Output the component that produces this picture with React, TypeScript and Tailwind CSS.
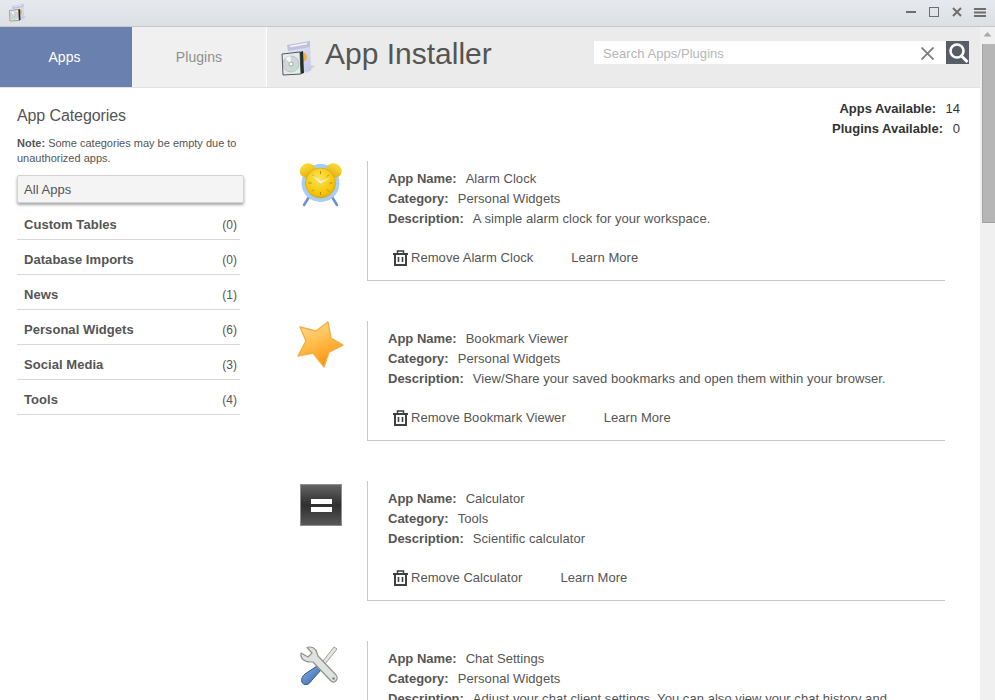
import { useId } from "react"

const categories = [
  { name: "Custom Tables", count: 0 },
  { name: "Database Imports", count: 0 },
  { name: "News", count: 1 },
  { name: "Personal Widgets", count: 6 },
  { name: "Social Media", count: 3 },
  { name: "Tools", count: 4 },
]

function InstallerIcon({ className }: { className?: string }) {
  const id = useId()
  return (
    <svg className={className} viewBox="0 0 36 36" fill="none">
      <defs>
        <linearGradient id={id} x1="0" y1="0" x2="1" y2="1">
          <stop offset="0" stopColor="#ecECF8" />
          <stop offset="1" stopColor="#c3c5e8" />
        </linearGradient>
      </defs>
      <path d="M24 33L30 30L36 25L30 24V31Z" fill="#c8c8d0" opacity="0.8" />
      <path d="M8 4L31 0L32 30L8 34Z" fill={`url(#${id})`} />
      <path d="M8 4L31 0L31 6L9 10Z" fill="#c0c1dc" />
      <path d="M11 5.500L28 2.500" stroke="#f6f6fc" strokeWidth="1.400" />
      <circle cx="23" cy="16" r="5" fill="#efb04a" />
      <path d="M10 12L19 10V14H10Z" fill="#b6dcc0" />
      <path d="M3 13L21 11L22 33L4 34Z" fill="#e6eaea" stroke="#55585a" strokeWidth="1" />
      <circle cx="12" cy="23" r="8" fill="#d0d6d8" stroke="#9ca2a4" strokeWidth="0.500" />
      <path d="M12 23L6.500 17.500A8 8 0 0 1 11.500 15Z" fill="#fafafa" />
      <path d="M12 23L17.500 28.500A8 8 0 0 1 12.500 31Z" fill="#b9e2c9" />
      <circle cx="12" cy="23" r="2" fill="#ffffff" stroke="#777777" strokeWidth="0.600" />
      <path d="M21 11L24 10L25 32L22 33Z" fill="#20302a" />
    </svg>
  )
}

function AlarmIcon() {
  const face = useId()
  const bell = useId()
  return (
    <svg className="w-[46px] h-[46px]" viewBox="0 0 46 46" fill="none">
      <defs>
        <radialGradient id={face} cx="0.45" cy="0.35" r="0.75">
          <stop offset="0" stopColor="#fde64f" />
          <stop offset="0.7" stopColor="#f4c408" />
          <stop offset="1" stopColor="#d99a04" />
        </radialGradient>
        <linearGradient id={bell} x1="0" y1="0" x2="0" y2="1">
          <stop offset="0" stopColor="#f9de3c" />
          <stop offset="1" stopColor="#e8ad06" />
        </linearGradient>
      </defs>
      <path d="M11 36L6 44M34 36L39 44" stroke="#6d8fd0" strokeWidth="2.500" strokeLinecap="round" />
      <circle cx="22.500" cy="22" r="19" fill="#a9cdfa" />
      <ellipse cx="9.500" cy="9.500" rx="8" ry="7" transform="rotate(-28 9.500 9.500)" fill={`url(#${bell})`} />
      <ellipse cx="36" cy="9.500" rx="8" ry="7" transform="rotate(28 36 9.500)" fill={`url(#${bell})`} />
      <circle cx="22.500" cy="22" r="15" fill={`url(#${face})`} stroke="#c2a11f" strokeWidth="0.600" />
      <path d="M22.500 10V13M22.500 31V34M10.500 22H13.500M31.500 22H34.500M14 13.500L16 15.500M31 13.500L29 15.500M14 30.500L16 28.500M31 30.500L29 28.500" stroke="#b98c0a" strokeWidth="1" />
      <path d="M13 13.500L22.500 22.500L32 17L23 20Z" fill="#eef0f4" />
    </svg>
  )
}

function StarIcon() {
  const id = useId()
  return (
    <svg className="w-[50px] h-[50px] -mt-[1px]" viewBox="0 0 50 50" fill="none">
      <defs>
        <linearGradient id={id} x1="0.3" y1="0" x2="0.7" y2="1">
          <stop offset="0" stopColor="#ffd98a" />
          <stop offset="0.5" stopColor="#ffb840" />
          <stop offset="1" stopColor="#fb8a0e" />
        </linearGradient>
      </defs>
      <path
        d="M32 2L35 18L47 25L33 32L28 47L17 33L2 36L10 21L4 7L20 11Z"
        fill={`url(#${id})`}
        stroke="#f7ad45"
        strokeWidth="1.400"
        strokeLinejoin="round"
      />
    </svg>
  )
}

function CalculatorIcon() {
  return (
    <div className="w-[42px] h-[42px] mt-[3px] border border-[#8f8f8f] bg-gradient-to-b from-[#646464] via-[#2f2f2f] to-[#585858] flex flex-col items-center justify-center gap-[3px]">
      <div className="w-[21px] h-[5px] bg-white" />
      <div className="w-[21px] h-[5px] bg-white" />
    </div>
  )
}

function ToolsIcon() {
  const id = useId()
  return (
    <svg className="w-[46px] h-[46px] mt-[3px]" viewBox="0 0 46 46" fill="none">
      <defs>
        <linearGradient id={id} x1="0" y1="0" x2="1" y2="1">
          <stop offset="0" stopColor="#8db4e2" />
          <stop offset="1" stopColor="#2f5ea8" />
        </linearGradient>
      </defs>
      <path d="M39 5L36 3L25 17L21 21L24 24L27 20Z" fill="#e6e7e4" stroke="#9a9e98" strokeWidth="1" />
      <path d="M19 22L7 30C2 34 3 40 7 40.500C10 41 12 39 14 36L24 25Z" fill={`url(#${id})`} stroke="#2d5792" strokeWidth="1" />
      <path
        d="M3 9L10 13L14 9L9 3.500C13 2 18 4 19 9L20 12L38 31C41 35 37 40 33 37L15 18L12 18C6 18 2 14 3 9Z"
        fill="#e0e2df"
        stroke="#90948e"
        strokeWidth="1.200"
        strokeLinejoin="round"
      />
      <circle cx="35.500" cy="34.500" r="1.200" fill="#777777" />
    </svg>
  )
}

function TrashIcon() {
  return (
    <svg className="w-[15px] h-[16px] shrink-0" viewBox="0 0 15 16" fill="none" stroke="#404040" strokeWidth="2">
      <path d="M0 4H15" />
      <path d="M4.500 4V1H10.500V4" strokeWidth="1.500" />
      <path d="M2 4V15H13V4" />
      <path d="M5.500 7V12M9.500 7V12" strokeWidth="1.600" />
    </svg>
  )
}

function AppRow({
  icon,
  name,
  category,
  description,
}: {
  icon: React.ReactNode
  name: string
  category: string
  description: string
}) {
  return (
    <div className="flex h-[160px] shrink-0">
      <div className="w-[100px] shrink-0 pl-[8px] flex justify-center items-start">{icon}</div>
      <div className="w-[578px] h-[120px] border-l border-b border-[#c8c8c8] pl-[20px] pt-[8px] leading-[20px]">
        <div>
          <b className="font-bold tracking-normal mr-[9px]">App Name:</b>
          {name}
        </div>
        <div>
          <b className="font-bold tracking-normal mr-[9px]">Category:</b>
          {category}
        </div>
        <div className="whitespace-nowrap">
          <b className="font-bold tracking-normal mr-[9px]">Description:</b>
          {description}
        </div>
        <div className="flex items-center gap-[38px] mt-[19px] pl-[5px]">
          <span className="flex items-center gap-[3px]">
            <TrashIcon />
            Remove {name}
          </span>
          <span>Learn More</span>
        </div>
      </div>
    </div>
  )
}

export default function App() {
  return (
    <div className="w-[995px] h-[700px] overflow-hidden flex flex-col bg-white text-[#555555] text-[13px] tracking-[0.05px] font-['Liberation_Sans',Arial,sans-serif]">
      {/* Title bar */}
      <div className="h-[27px] shrink-0 flex items-center justify-between bg-gradient-to-b from-[#e6e9ed] to-[#dcdfe3] border-b border-[#c6c8ca]">
        <InstallerIcon className="w-[18px] h-[18px] ml-[8px]" />
        <div className="flex items-center mr-[9px] mb-[2px] text-[#6e6e6e]">
          <svg className="w-[10px] h-[10px]" viewBox="0 0 10 10" fill="currentColor">
            <rect x="0" y="4" width="10" height="2" />
          </svg>
          <svg className="w-[10px] h-[10px] ml-[13px]" viewBox="0 0 10 10" fill="none" stroke="currentColor">
            <rect x="0.5" y="0.5" width="9" height="9" />
          </svg>
          <svg className="w-[10px] h-[10px] ml-[13px]" viewBox="0 0 10 10" fill="none" stroke="currentColor" strokeWidth="2">
            <path d="M1 1L9 9M9 1L1 9" />
          </svg>
          <svg className="w-[12px] h-[9px] ml-[12px]" viewBox="0 0 12 9" fill="currentColor">
            <rect y="0" width="12" height="2" />
            <rect y="3.5" width="12" height="2" />
            <rect y="7" width="12" height="2" />
          </svg>
        </div>
      </div>

      <div className="flex-1 min-h-0 flex">
        <div className="flex-1 min-w-0 flex flex-col">
          {/* Tabs and header */}
          <div className="h-[61px] shrink-0 flex border-b border-[#e2e2e2]">
            <div className="w-[132px] bg-[#6a80ae] text-white text-[14px] pr-[3px] flex items-center justify-center">Apps</div>
            <div className="w-[134px] bg-[#f0f0f0] text-[#8f8f8f] text-[14px] flex items-center justify-center">Plugins</div>
            <div className="w-[1px] bg-white" />
            <div className="flex-1 bg-[#ebebeb] flex items-start">
              <InstallerIcon className="w-[36px] h-[36px] ml-[12px] mt-[14px]" />
              <span className="ml-[10px] mt-[7px] text-[30px] leading-[40px] tracking-normal text-[#555555]">App Installer</span>
              <div className="ml-auto mr-[11px] mt-[14px] w-[375px] h-[23px] flex bg-white">
                <span className="flex-1 pl-[9px] leading-[25px] text-[#b5b5b5]">Search Apps/Plugins</span>
                <svg className="w-[13px] h-[13px] mt-[6px] mr-[12px]" viewBox="0 0 13 13" fill="none" stroke="#7c7c7c" strokeWidth="1.800">
                  <path d="M0.5 0.5L12.5 12.5M12.5 0.5L0.5 12.5" />
                </svg>
                <div className="w-[23px] h-[23px] bg-[#575c66]">
                  <svg className="w-[23px] h-[23px]" viewBox="0 0 23 23" fill="none" stroke="#ffffff">
                    <circle cx="11" cy="10" r="6.500" strokeWidth="2.600" />
                    <path d="M15.500 15L21.500 21" strokeWidth="3" />
                  </svg>
                </div>
              </div>
            </div>
          </div>

          {/* Body */}
          <div className="flex-1 min-h-0 flex">
            <aside className="w-[267px] shrink-0 pl-[17px] pr-[27px] pt-[19px]">
              <h2 className="text-[16px] leading-[18px] font-normal tracking-[-0.1px]">App Categories</h2>
              <p className="mt-[11px] text-[11px] leading-[15px] tracking-normal">
                <b>Note:</b> Some categories may be empty due to unauthorized apps.
              </p>
              <div className="mt-[9px] h-[28px] w-[227px] -mr-[4px] pl-[6px] leading-[28px] bg-[#f4f4f4] border border-[#d4d4d4] rounded-[2px] shadow-[0_2px_3px_rgba(0,0,0,0.35)]">
                All Apps
              </div>
              <ul className="mt-[2px] w-[223px]">
                {categories.map((c) => (
                  <li key={c.name} className="h-[35px] pt-[5px] flex items-center justify-between pl-[7px] pr-[3px] border-b border-[#d8d8d8]">
                    <b className="tracking-[0.05px]">{c.name}</b>
                    <span className="text-[12px] tracking-normal">({c.count})</span>
                  </li>
                ))}
              </ul>
            </aside>

            <main className="flex-1 min-w-0 flex flex-col overflow-hidden pt-[11px]">
              <div className="self-end mr-[20px] w-[200px] text-[#333333] leading-[20px] tracking-normal">
                <div className="flex justify-end">
                  <b>Apps Available:</b>
                  <span className="w-[24px] text-right">14</span>
                </div>
                <div className="flex justify-end">
                  <b>Plugins Available:</b>
                  <span className="w-[17px] text-right">0</span>
                </div>
              </div>
              <div className="mt-[22px] flex flex-col">
                <AppRow
                  icon={<AlarmIcon />}
                  name="Alarm Clock"
                  category="Personal Widgets"
                  description="A simple alarm clock for your workspace."
                />
                <AppRow
                  icon={<StarIcon />}
                  name="Bookmark Viewer"
                  category="Personal Widgets"
                  description="View/Share your saved bookmarks and open them within your browser."
                />
                <AppRow
                  icon={<CalculatorIcon />}
                  name="Calculator"
                  category="Tools"
                  description="Scientific calculator"
                />
                <AppRow
                  icon={<ToolsIcon />}
                  name="Chat Settings"
                  category="Personal Widgets"
                  description="Adjust your chat client settings. You can also view your chat history and"
                />
              </div>
            </main>
          </div>
        </div>

        {/* Scrollbar */}
        <div className="w-[15px] shrink-0 bg-[#f0f0f0] flex flex-col items-end">
          <svg className="w-[15px] h-[17px] shrink-0" viewBox="0 0 15 17" fill="#a8a8a8">
            <path d="M7.500 5L11.500 9.500H3.500Z" />
          </svg>
          <div className="w-[13px] h-[179px] bg-[#b6b6b6] border-l border-b border-[#a3a3a3]" />
        </div>
      </div>
    </div>
  )
}
